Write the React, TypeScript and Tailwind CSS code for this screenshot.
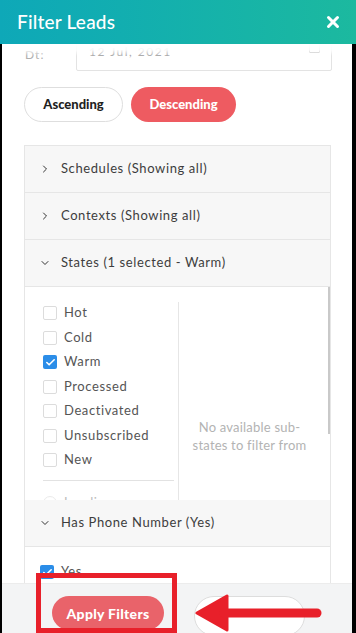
import { Check, ChevronDown, ChevronRight, X } from "lucide-react";

const states = [
  { label: "Hot", checked: false },
  { label: "Cold", checked: false },
  { label: "Warm", checked: true },
  { label: "Processed", checked: false },
  { label: "Deactivated", checked: false },
  { label: "Unsubscribed", checked: false },
  { label: "New", checked: false },
];

export default function App() {
  return (
    <div
      className="relative h-[633px] w-[356px] overflow-hidden bg-black"
      style={{ fontFamily: "Lato, 'Open Sans', sans-serif" }}
    >
      <header className="flex h-[44px] items-center justify-between bg-gradient-to-r from-[#0ea8b8] to-[#1cb99f] pl-[17px] pr-[14px] text-white">
        <h1 className="text-[19px] font-medium tracking-[0.2px]">Filter Leads</h1>
        <X className="h-[18px] w-[18px]" strokeWidth={4} />
      </header>

      <main className="relative ml-[2px] mr-[4px] h-[589px] overflow-hidden bg-white">
        <DateRow />

        <div className="flex gap-[8px] pl-[22px] pt-[15px]">
          <button className="h-[35px] w-[99px] rounded-full border border-[#dedede] bg-white text-[13px] font-black text-[#1f1f1f]">
            Ascending
          </button>
          <button className="h-[35px] w-[105px] rounded-full bg-[#ee5b61] text-[13px] font-black text-white">
            Descending
          </button>
        </div>

        <section className="ml-[22px] mt-[23px] w-[307px] border border-[#e6e6e6]">
          <AccordionRow open={false} title="Schedules (Showing all)" />
          <AccordionRow open={false} title="Contexts (Showing all)" />
          <AccordionRow open title="States (1 selected - Warm)" />

          <div className="relative flex h-[213px] overflow-hidden bg-white">
            <div className="w-[153px] pl-[18px] pr-[4px] pt-[19px]">
              <div className="flex flex-col gap-[10.5px]">
                {states.map((s) => (
                  <CheckItem key={s.label} label={s.label} checked={s.checked} />
                ))}
              </div>
              <div className="mt-[13px] h-px w-[131px] bg-[#e2e2e2]" />
              <div className="mt-[12px] flex items-center gap-[7px] opacity-40">
                <span className="h-[14px] w-[14px] rounded-full border border-[#ccc]" />
                <span className="text-[13px] tracking-[0.5px] text-[#555]">Landing</span>
              </div>
            </div>
            <div className="mt-[15px] w-px bg-[#e6e6e6]" />
            <div className="flex-1 pt-[131px] pr-[10px] text-center text-[13px] leading-[18px] tracking-[0.2px] text-[#b3b3b3]">
              No available sub-
              <br />
              states to filter from
            </div>
            <div className="absolute right-0 top-0 h-[147px] w-[2px] bg-[#c9c9c9]" />
          </div>

          <AccordionRow open title="Has Phone Number (Yes)" />
          <div className="h-[60px] bg-white pl-[15px] pt-[18px]">
            <CheckItem label="Yes" checked />
          </div>
        </section>

        <footer className="absolute bottom-0 left-0 right-0 h-[50px] border-t border-[#ececec] bg-[#f3f4f5]">
          <div className="flex gap-[30px] pl-[50px] pt-[12px]">
            <button className="h-[34px] w-[112px] rounded-full bg-[#e9636a] text-[14px] font-black tracking-[0.3px] text-white">
              Apply Filters
            </button>
            <button className="h-[40px] w-[111px] rounded-full border border-[#dddddd] bg-white" />
          </div>
        </footer>
      </main>

      {/* annotation overlay */}
      <div className="absolute left-[36px] top-[573px] h-[60px] w-[141px] border-[5px] border-[#e8202a]" />
      <svg className="absolute left-[194px] top-[594px]" width="130" height="40" viewBox="0 0 130 40">
        <path d="M3 19 L33 2 L33 36 Z" fill="#e8202a" stroke="#e8202a" strokeWidth="3" strokeLinejoin="round" />
        <line x1="30" y1="19" x2="123" y2="19" stroke="#e8202a" strokeWidth="9" strokeLinecap="round" />
      </svg>
    </div>
  );
}

function DateRow() {
  return (
    <div className="relative h-[28px] overflow-hidden">
      <div className="absolute left-[23px] top-[2px] text-[12px] tracking-[1px] text-[#b0b0b0]">Dt:</div>
      <div className="absolute left-[74px] top-[-14px] h-[41px] w-[256px] rounded-[2px] border border-[#e3e3e3] bg-white">
        <span className="absolute left-[12px] top-[12px] text-[12px] tracking-[1.5px] text-[#a5a5a5]">
          12 Jul, 2021
        </span>
        <span className="absolute right-[11px] top-[12px] h-[10px] w-[11px] rounded-[1px] border border-[#b5b5b5]" />
      </div>
      <div className="absolute inset-x-0 top-0 h-[12px] bg-gradient-to-b from-white via-white/90 to-white/0" />
    </div>
  );
}

function AccordionRow({ title, open }: { title: string; open: boolean }) {
  return (
    <div className="flex h-[47px] items-center gap-[10px] border-b border-[#e6e6e6] bg-[#f7f7f7] pl-[14px]">
      {open ? (
        <ChevronDown className="h-[12px] w-[12px] text-[#333]" strokeWidth={2} />
      ) : (
        <ChevronRight className="h-[12px] w-[12px] text-[#333]" strokeWidth={2} />
      )}
      <span className="text-[13px] tracking-[0.6px] text-[#3d3d3d]">{title}</span>
    </div>
  );
}

function CheckItem({ label, checked }: { label: string; checked: boolean }) {
  return (
    <div className="flex h-[14px] items-center gap-[7px]">
      {checked ? (
        <span className="flex h-[14px] w-[14px] items-center justify-center rounded-[2px] bg-[#2b8de8]">
          <Check className="h-[11px] w-[11px] text-white" strokeWidth={3.5} />
        </span>
      ) : (
        <span className="h-[14px] w-[14px] rounded-[2px] border border-[#dcdcdc] bg-white" />
      )}
      <span className="text-[13px] tracking-[0.6px] text-[#555]">{label}</span>
    </div>
  );
}
